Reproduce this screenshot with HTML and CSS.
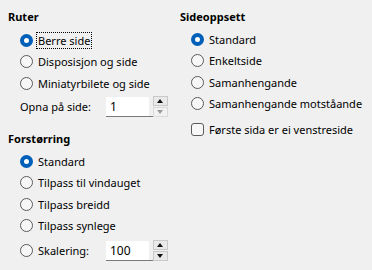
FILE: index.html
```html
<!DOCTYPE html>
<html>
<head>
<meta charset="utf-8">
<link rel="stylesheet" href="styles.css">
</head>
<body>
<div class="page">
  <div class="col col-left">
    <div class="hdr">Ruter</div>
    <div class="rows">
      <div class="row"><span class="radio on"></span><span class="lbl focus">Berre side</span></div>
      <div class="row"><span class="radio"></span><span class="lbl">Disposisjon og side</span></div>
      <div class="row"><span class="radio"></span><span class="lbl">Miniatyrbilete og side</span></div>
    </div>
    <div class="row spinrow">
      <span class="plain">Opna på side:</span>
      <div class="spin">
        <div class="spin-field">1</div>
        <div class="spin-btns">
          <div class="spin-btn up"></div>
          <div class="spin-btn down dis"></div>
        </div>
      </div>
    </div>
    <div class="hdr hdr2">Forstørring</div>
    <div class="rows rows2">
      <div class="row"><span class="radio on"></span><span class="lbl">Standard</span></div>
      <div class="row"><span class="radio"></span><span class="lbl">Tilpass til vindauget</span></div>
      <div class="row"><span class="radio"></span><span class="lbl">Tilpass breidd</span></div>
      <div class="row"><span class="radio"></span><span class="lbl">Tilpass synlege</span></div>
    </div>
    <div class="row spinrow2">
      <span class="radio"></span><span class="lbl scale">Skalering:</span>
      <div class="spin">
        <div class="spin-field">100</div>
        <div class="spin-btns">
          <div class="spin-btn up"></div>
          <div class="spin-btn down"></div>
        </div>
      </div>
    </div>
  </div>
  <div class="col col-right">
    <div class="hdr">Sideoppsett</div>
    <div class="rows rowsr">
      <div class="row"><span class="radio on"></span><span class="lbl">Standard</span></div>
      <div class="row"><span class="radio"></span><span class="lbl">Enkeltside</span></div>
      <div class="row"><span class="radio"></span><span class="lbl">Samanhengande</span></div>
      <div class="row"><span class="radio"></span><span class="lbl">Samanhengande motståande</span></div>
    </div>
    <div class="row checkrow"><span class="check"></span><span class="lbl">Første sida er ei venstreside</span></div>
  </div>
</div>
</body>
</html>
```

FILE: styles.css
```css
html, body {
  margin: 0;
  padding: 0;
  background: #f0f0f0;
}
body {
  font-family: "Noto Sans", "Open Sans", sans-serif;
  font-size: 11px;
  color: #000;
  width: 372px;
  height: 270px;
  overflow: hidden;
}
.page {
  display: flex;
  padding: 7px 0 0 8px;
}
.col-left {
  width: 172px;
}
.col {
  display: flex;
  flex-direction: column;
}
.hdr {
  height: 20px;
  line-height: 20px;
  font-weight: bold;
}
.hdr2 {
  margin-top: 11px;
}
.rows {
  display: flex;
  flex-direction: column;
  padding-left: 12px;
  margin-top: 3px;
}
.rows2 {
  margin-top: 2px;
}
.rowsr {
  padding-left: 11px;
  margin-top: 2px;
}
.row {
  display: flex;
  align-items: center;
  height: 21.3px;
}
.radio {
  width: 11px;
  height: 11px;
  border: 1px solid #5a5a5a;
  border-radius: 50%;
  background: #f7f7f7;
  box-sizing: content-box;
  flex: none;
  margin-right: 4px;
}
.radio.on {
  width: 5px;
  height: 5px;
  border: 4px solid #005fb8;
  background: #fff;
}
.lbl {
  white-space: nowrap;
  padding: 0 1px;
  line-height: 15px;
}
.focus {
  outline: 1px dotted #000;
  outline-offset: 0px;
}
.spinrow {
  padding-left: 12px;
  height: 22px;
  margin-top: 2px;
}
.plain {
  width: 86px;
}
.spinrow2 {
  padding-left: 12px;
  height: 21px;
  margin-top: 4px;
}
.scale {
  width: 67px;
}
.spin {
  display: flex;
  align-items: center;
  width: 62px;
  height: 20px;
  border-bottom: 1px solid #7a7a7a;
  box-sizing: border-box;
}
.spin-field {
  width: 39px;
  height: 100%;
  background: #fff;
  padding-left: 4px;
  line-height: 20px;
  font-size: 12px;
}
.spin-btns {
  display: flex;
  flex-direction: column;
  gap: 1px;
  margin-left: 4px;
}
.spin-btn {
  width: 13px;
  height: 8px;
  border: 1px solid #c8c8c8;
  background: #e9e9e9;
  position: relative;
  box-sizing: content-box;
}
.spin-btn::after {
  content: "";
  position: absolute;
  left: 3px;
  top: 2px;
  border-left: 3.5px solid transparent;
  border-right: 3.5px solid transparent;
}
.spin-btn.up::after {
  border-bottom: 4px solid #111;
}
.spin-btn.down::after {
  border-top: 4px solid #111;
}
.spin-btn.dis {
  background: #f2f2f2;
  border-color: #dadada;
}
.spin-btn.dis::after {
  border-top-color: #9a9a9a;
}
.checkrow {
  padding-left: 11px;
  margin-top: 5px;
}
.check {
  width: 11px;
  height: 11px;
  border: 1px solid #5a5a5a;
  border-radius: 3px;
  background: #f7f7f7;
  margin-right: 4px;
  flex: none;
}
```
